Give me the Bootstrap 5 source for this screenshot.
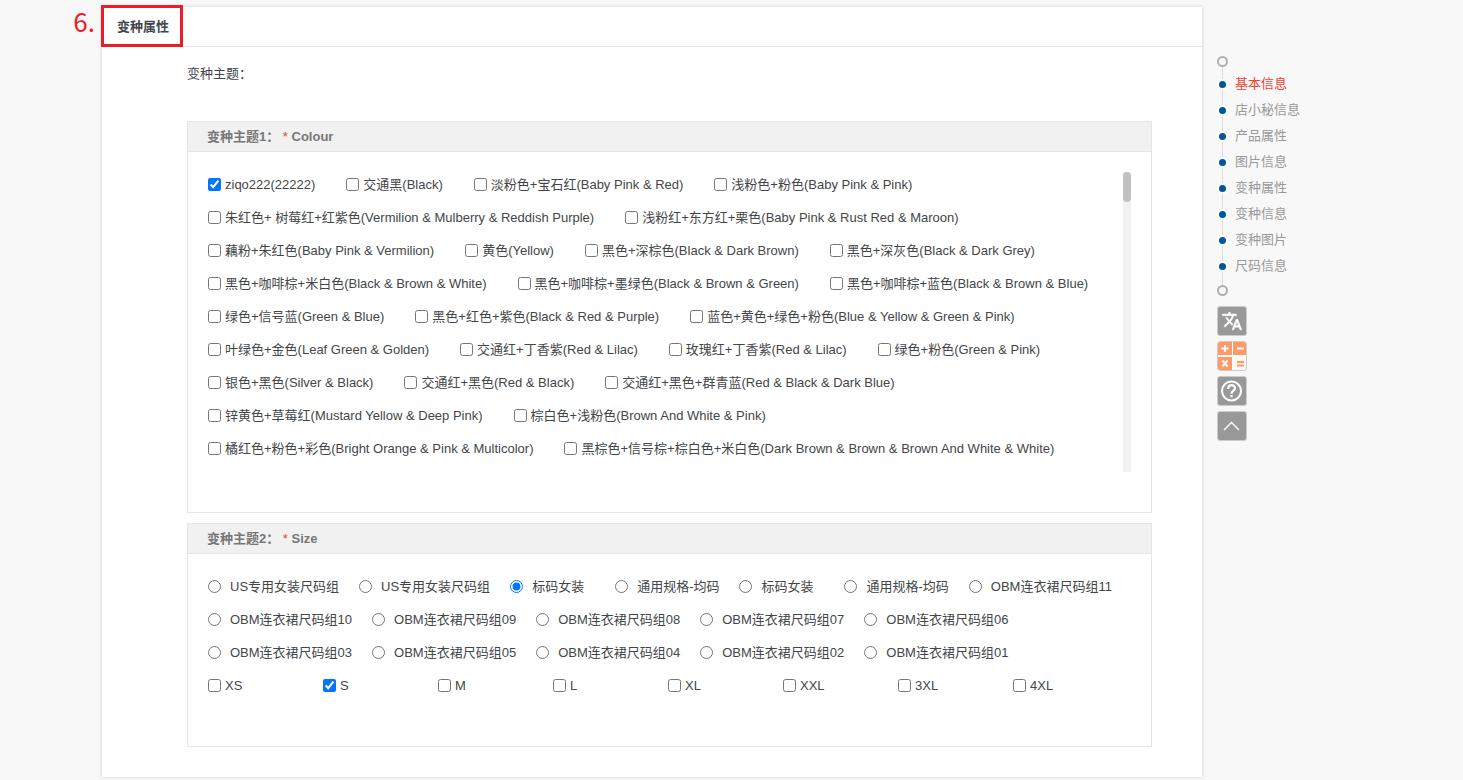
<!DOCTYPE html>
<html lang="zh-CN">
<head>
<meta charset="utf-8">
<meta name="viewport" content="width=device-width, initial-scale=1">
<title>变种属性</title>
<link href="https://cdn.jsdelivr.net/npm/bootstrap@5.3.0/dist/css/bootstrap.min.css" rel="stylesheet">
<style>
  body { background: #f8f8f8; color: #434649; font: 13px/20px "Liberation Sans", "Noto Sans CJK SC", sans-serif; }
  .step-col { width: 102px; padding: 7px 7px 0 0; color: #ed1c24; font: 26px/28px "Noto Sans CJK SC", sans-serif; }
  .side-col { width: 261px; padding: 56px 0 0 15px; }
  .panel { margin: 7px 0 3px; background: #fff; box-shadow: 0 0 4px rgba(0, 0, 0, .16); }
  .panel-head { height: 40px; padding: 0 15px; border-bottom: 1px solid #e6e6e6; }
  .panel-head h1 { font-size: 13px; line-height: 20px; font-weight: 700; }
  .highlight { top: -2px; left: -1px; width: 82px; height: 42px; border: 3px solid #ed1c24; }
  .panel-main { padding: 17px 50px 30px 85px; }
  .theme-label { margin-bottom: 37px; }
  .theme-box { border: 1px solid #e6e6e6; }
  .theme-box + .theme-box { margin-top: 10px; }
  .theme-head { height: 30px; padding: 0 19px; background: #f1f1f1; border-bottom: 1px solid #e6e6e6; color: #777; }
  .theme-head h2 { font-size: 13px; line-height: 20px; font-weight: 700; }
  .star { color: #f04134; font-weight: 400; }
  .theme-body { padding: 20px 20px 40px; }
  .colour-view { height: 300px; overflow: hidden; }
  .group-list { column-gap: 20px; }
  .bar-track { width: 8px; background: #f1f1f1; }
  .bar-thumb { height: 30px; border-radius: 4px; background: #c1c1c1; }
  .pick { display: flex; align-items: center; height: 25px; margin-bottom: 8px; white-space: nowrap; }
  .pick input { width: 13px; height: 13px; margin: 0; flex: none; accent-color: #0075ff; }
  .pick-colour { gap: 4px; margin-right: 31px; }
  .pick-group { gap: 9px; min-width: 85px; }
  .pick-size { gap: 4px; width: 115px; }
  .ring { width: 11px; height: 11px; border: 2px solid #b0b0b0; border-radius: 50%; background: #f8f8f8; }
  .steps { margin: 4px 0 6px; }
  .steps::before { content: ""; position: absolute; left: 5px; top: -4px; bottom: -6px; width: 1px; background: #ddd; }
  .steps li { height: 26px; gap: 7px; }
  .dot { width: 11px; height: 11px; border: 2px solid #fff; border-radius: 50%; background: #0055a2; position: relative; }
  .steps a { color: #999; text-decoration: none; }
  .steps a.current { color: #f04134; }
  .tools { margin-top: 10px; gap: 5px; }
  .tool { width: 30px; height: 30px; padding: 0; border: 0; background: none; }
  .tool svg { display: block; }
</style>
</head>
<body>
<div class="d-flex align-items-stretch">
  <div class="step-col text-end flex-shrink-0">6.</div>

  <main class="panel flex-grow-1">
    <header class="panel-head d-flex align-items-center position-relative">
      <h1 class="m-0">变种属性</h1>
      <span class="highlight position-absolute"></span>
    </header>
    <div class="panel-main">
      <div class="theme-label">变种主题：</div>

      <section class="theme-box">
        <div class="theme-head d-flex align-items-center"><h2 class="m-0">变种主题1： <span class="star">*</span> Colour</h2></div>
        <div class="theme-body d-flex">
          <div class="colour-view flex-grow-1">
            <div class="d-flex flex-wrap">
              <label class="pick pick-colour"><input type="checkbox" checked>ziqo222(22222)</label>
              <label class="pick pick-colour"><input type="checkbox">交通黑(Black)</label>
              <label class="pick pick-colour"><input type="checkbox">淡粉色+宝石红(Baby Pink &amp; Red)</label>
              <label class="pick pick-colour"><input type="checkbox">浅粉色+粉色(Baby Pink &amp; Pink)</label>
              <label class="pick pick-colour"><input type="checkbox">朱红色+ 树莓红+红紫色(Vermilion &amp; Mulberry &amp; Reddish Purple)</label>
              <label class="pick pick-colour"><input type="checkbox">浅粉红+东方红+栗色(Baby Pink &amp; Rust Red &amp; Maroon)</label>
              <label class="pick pick-colour"><input type="checkbox">藕粉+朱红色(Baby Pink &amp; Vermilion)</label>
              <label class="pick pick-colour"><input type="checkbox">黄色(Yellow)</label>
              <label class="pick pick-colour"><input type="checkbox">黑色+深棕色(Black &amp; Dark Brown)</label>
              <label class="pick pick-colour"><input type="checkbox">黑色+深灰色(Black &amp; Dark Grey)</label>
              <label class="pick pick-colour"><input type="checkbox">黑色+咖啡棕+米白色(Black &amp; Brown &amp; White)</label>
              <label class="pick pick-colour"><input type="checkbox">黑色+咖啡棕+墨绿色(Black &amp; Brown &amp; Green)</label>
              <label class="pick pick-colour"><input type="checkbox">黑色+咖啡棕+蓝色(Black &amp; Brown &amp; Blue)</label>
              <label class="pick pick-colour"><input type="checkbox">绿色+信号蓝(Green &amp; Blue)</label>
              <label class="pick pick-colour"><input type="checkbox">黑色+红色+紫色(Black &amp; Red &amp; Purple)</label>
              <label class="pick pick-colour"><input type="checkbox">蓝色+黄色+绿色+粉色(Blue &amp; Yellow &amp; Green &amp; Pink)</label>
              <label class="pick pick-colour"><input type="checkbox">叶绿色+金色(Leaf Green &amp; Golden)</label>
              <label class="pick pick-colour"><input type="checkbox">交通红+丁香紫(Red &amp; Lilac)</label>
              <label class="pick pick-colour"><input type="checkbox">玫瑰红+丁香紫(Red &amp; Lilac)</label>
              <label class="pick pick-colour"><input type="checkbox">绿色+粉色(Green &amp; Pink)</label>
              <label class="pick pick-colour"><input type="checkbox">银色+黑色(Silver &amp; Black)</label>
              <label class="pick pick-colour"><input type="checkbox">交通红+黑色(Red &amp; Black)</label>
              <label class="pick pick-colour"><input type="checkbox">交通红+黑色+群青蓝(Red &amp; Black &amp; Dark Blue)</label>
              <label class="pick pick-colour"><input type="checkbox">锌黄色+草莓红(Mustard Yellow &amp; Deep Pink)</label>
              <label class="pick pick-colour"><input type="checkbox">棕白色+浅粉色(Brown And White &amp; Pink)</label>
              <label class="pick pick-colour"><input type="checkbox">橘红色+粉色+彩色(Bright Orange &amp; Pink &amp; Multicolor)</label>
              <label class="pick pick-colour"><input type="checkbox">黑棕色+信号棕+棕白色+米白色(Dark Brown &amp; Brown &amp; Brown And White &amp; White)</label>
            </div>
          </div>
          <div class="bar-track flex-shrink-0"><div class="bar-thumb"></div></div>
        </div>
      </section>

      <section class="theme-box">
        <div class="theme-head d-flex align-items-center"><h2 class="m-0">变种主题2： <span class="star">*</span> Size</h2></div>
        <div class="theme-body">
          <div class="group-list d-flex flex-wrap">
            <label class="pick pick-group"><input type="radio" name="group">US专用女装尺码组</label>
            <label class="pick pick-group"><input type="radio" name="group">US专用女装尺码组</label>
            <label class="pick pick-group"><input type="radio" name="group" checked>标码女装</label>
            <label class="pick pick-group"><input type="radio" name="group">通用规格-均码</label>
            <label class="pick pick-group"><input type="radio" name="group">标码女装</label>
            <label class="pick pick-group"><input type="radio" name="group">通用规格-均码</label>
            <label class="pick pick-group"><input type="radio" name="group">OBM连衣裙尺码组11</label>
            <label class="pick pick-group"><input type="radio" name="group">OBM连衣裙尺码组10</label>
            <label class="pick pick-group"><input type="radio" name="group">OBM连衣裙尺码组09</label>
            <label class="pick pick-group"><input type="radio" name="group">OBM连衣裙尺码组08</label>
            <label class="pick pick-group"><input type="radio" name="group">OBM连衣裙尺码组07</label>
            <label class="pick pick-group"><input type="radio" name="group">OBM连衣裙尺码组06</label>
            <label class="pick pick-group"><input type="radio" name="group">OBM连衣裙尺码组03</label>
            <label class="pick pick-group"><input type="radio" name="group">OBM连衣裙尺码组05</label>
            <label class="pick pick-group"><input type="radio" name="group">OBM连衣裙尺码组04</label>
            <label class="pick pick-group"><input type="radio" name="group">OBM连衣裙尺码组02</label>
            <label class="pick pick-group"><input type="radio" name="group">OBM连衣裙尺码组01</label>
          </div>
          <div class="d-flex flex-wrap">
            <label class="pick pick-size"><input type="checkbox">XS</label>
            <label class="pick pick-size"><input type="checkbox" checked>S</label>
            <label class="pick pick-size"><input type="checkbox">M</label>
            <label class="pick pick-size"><input type="checkbox">L</label>
            <label class="pick pick-size"><input type="checkbox">XL</label>
            <label class="pick pick-size"><input type="checkbox">XXL</label>
            <label class="pick pick-size"><input type="checkbox">3XL</label>
            <label class="pick pick-size"><input type="checkbox">4XL</label>
          </div>
        </div>
      </section>
    </div>
  </main>

  <aside class="side-col flex-shrink-0">
    <nav>
      <div class="ring position-relative z-1"></div>
      <ul class="steps list-unstyled position-relative">
        <li class="d-flex align-items-center"><span class="dot"></span><a class="current" href="#">基本信息</a></li>
        <li class="d-flex align-items-center"><span class="dot"></span><a href="#">店小秘信息</a></li>
        <li class="d-flex align-items-center"><span class="dot"></span><a href="#">产品属性</a></li>
        <li class="d-flex align-items-center"><span class="dot"></span><a href="#">图片信息</a></li>
        <li class="d-flex align-items-center"><span class="dot"></span><a href="#">变种属性</a></li>
        <li class="d-flex align-items-center"><span class="dot"></span><a href="#">变种信息</a></li>
        <li class="d-flex align-items-center"><span class="dot"></span><a href="#">变种图片</a></li>
        <li class="d-flex align-items-center"><span class="dot"></span><a href="#">尺码信息</a></li>
      </ul>
      <div class="ring position-relative"></div>
    </nav>
    <div class="tools d-flex flex-column">
      <button class="tool" type="button" aria-label="翻译">
        <svg width="30" height="30" viewBox="0 0 30 30"><rect x=".5" y=".5" width="29" height="29" rx="2.5" fill="#999" stroke="#ccc"/><g transform="translate(4.5 4.5) scale(.88)"><path fill="#fff" d="M12.87 15.07l-2.54-2.51.03-.03A17.52 17.52 0 0 0 14.07 6H17V4h-7V2H8v2H1v2h11.17C11.5 7.92 10.44 9.75 9 11.35 8.07 10.32 7.3 9.19 6.69 8h-2c.73 1.63 1.73 3.17 2.98 4.56l-5.09 5.02L4 19l5-5 3.11 3.11.76-2.04zM18.5 10h-2L12 22h2l1.12-3h4.75L21 22h2l-4.5-12zm-2.62 7l1.62-4.33L19.12 17h-3.24z" stroke="#fff" stroke-width=".5"/></g></svg>
      </button>
      <button class="tool" type="button" aria-label="计算器">
        <svg width="30" height="30" viewBox="0 0 30 30"><rect x=".5" y=".5" width="29" height="29" rx="2.5" fill="#fff" stroke="#ccc"/><path fill="#ff9966" d="M3 1h12v13H1V3a2 2 0 0 1 2-2zM16 1h11a2 2 0 0 1 2 2v11H16zM1 16h14v13H3a2 2 0 0 1-2-2z"/><path fill="#fff7f2" d="M17 16h12v11a2 2 0 0 1-2 2H17z"/><path fill="none" stroke="#fff" stroke-width="2" d="M4.500 7.500h7M8 4v7M20 7.500h7M5.500 19.500l5 6M10.500 19.500l-5 6"/><path fill="none" stroke="#ff9966" stroke-width="2" d="M20 21h7M20 24.500h7"/></svg>
      </button>
      <button class="tool" type="button" aria-label="帮助">
        <svg width="30" height="30" viewBox="0 0 30 30"><rect x=".5" y=".5" width="29" height="29" rx="2.500" fill="#999" stroke="#ccc"/><circle cx="14.500" cy="15" r="9.500" fill="none" stroke="#fff" stroke-width="2"/><path fill="none" stroke="#fff" stroke-width="2.200" d="M11 13c0-5 7-5 7-.8 0 2.600-3.500 2.700-3.500 5.500M14.500 19v2.300"/></svg>
      </button>
      <button class="tool" type="button" aria-label="回到顶部">
        <svg width="30" height="30" viewBox="0 0 30 30"><rect x=".5" y=".5" width="29" height="29" rx="2.500" fill="#999" stroke="#ccc"/><path fill="none" stroke="#fff" stroke-width="1.400" d="M7 19l7.500-7.500L22 19"/></svg>
      </button>
    </div>
  </aside>
</div>
<script src="https://cdn.jsdelivr.net/npm/bootstrap@5.3.0/dist/js/bootstrap.bundle.min.js"></script>
</body>
</html>
